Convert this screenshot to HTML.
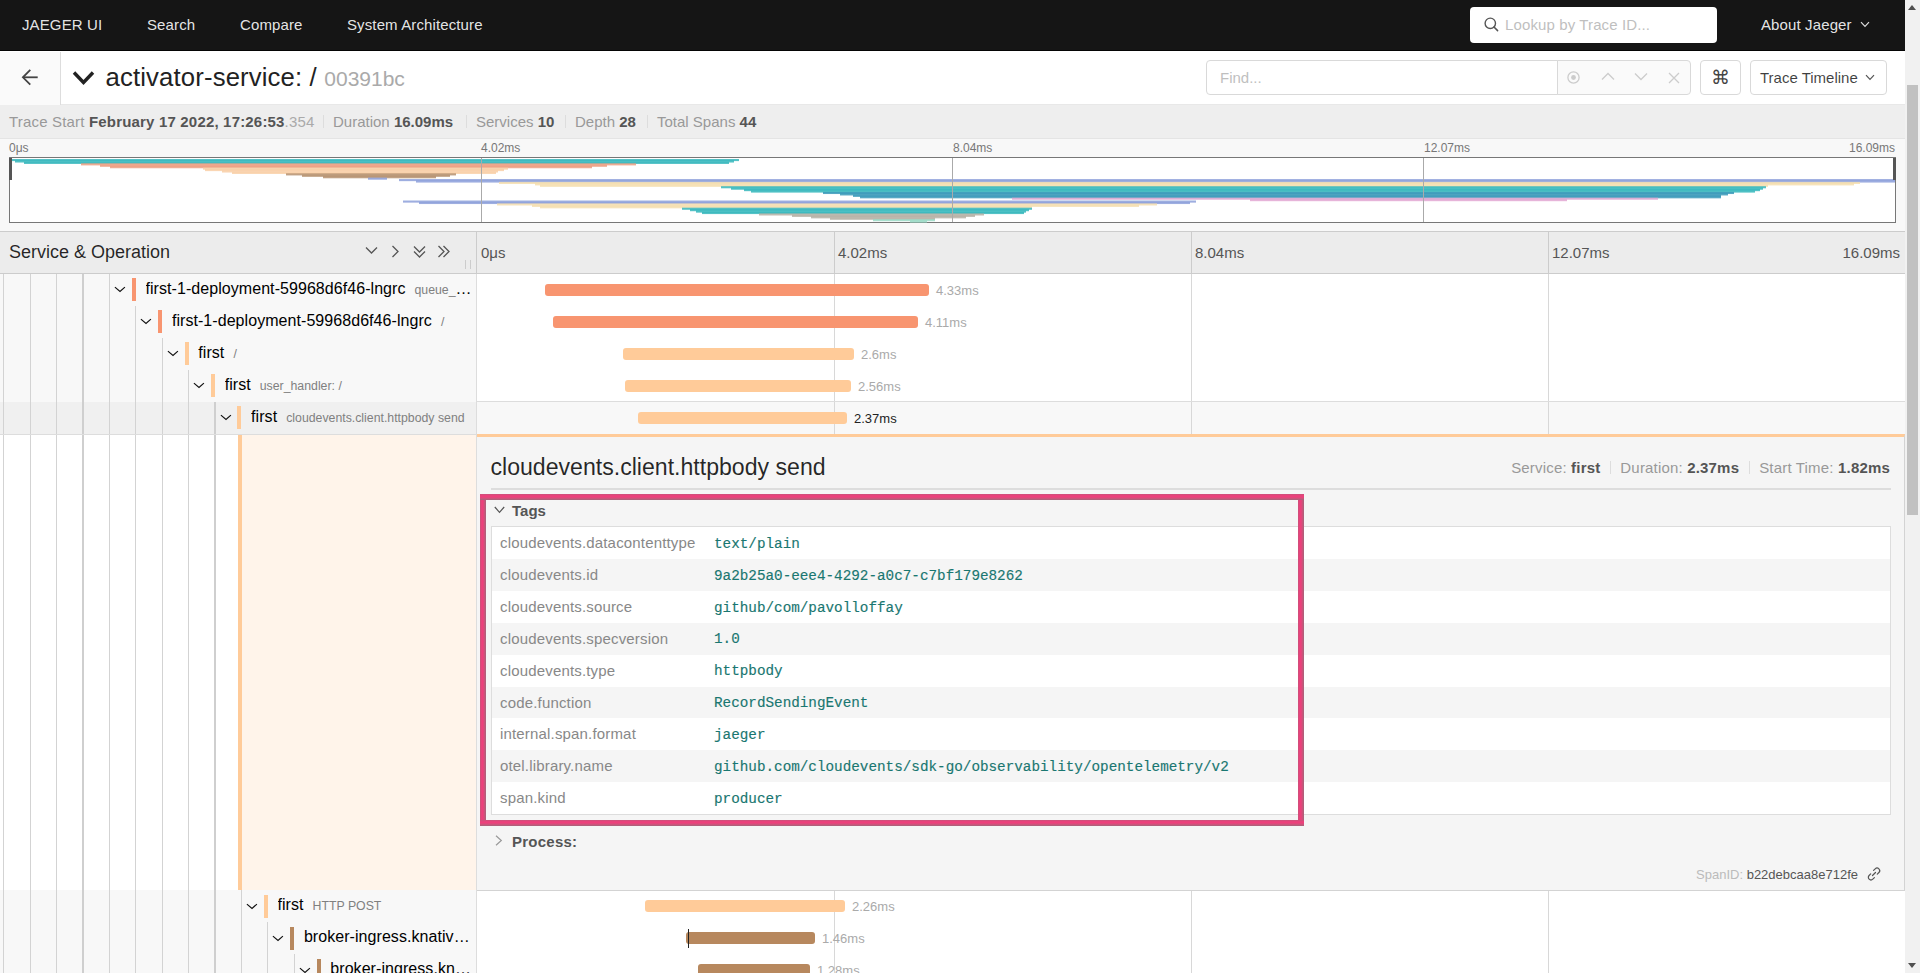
<!DOCTYPE html><html><head><meta charset="utf-8"><style>
*{box-sizing:border-box;margin:0;padding:0}
html,body{width:1920px;height:973px;overflow:hidden;background:#fff;font-family:"Liberation Sans",sans-serif;color:rgba(0,0,0,.85)}
.a{position:absolute}
.nw{white-space:nowrap}
#top{left:0;top:0;width:1905px;height:51px;background:#151515;border-bottom:1px solid #050505}
#top .it{position:absolute;top:0;line-height:49px;font-size:15px;letter-spacing:.12px;color:rgba(255,255,255,.9);white-space:nowrap}
#sbar{left:1905px;top:0;width:15px;height:973px;background:#f1f1f1}
#sthumb{left:1907px;top:85px;width:11px;height:430px;background:#c1c1c1}
.tri{position:absolute;width:0;height:0;border-left:4.5px solid transparent;border-right:4.5px solid transparent}
#summ{left:0;top:105px;width:1905px;height:34px;background:#eee;border-bottom:1px solid #e4e4e4;font-size:15px;color:#999;white-space:nowrap}
#summ .itm{position:absolute;top:0;line-height:33px}
#summ b{color:#555;font-weight:bold}
#summ .dv{position:absolute;top:10px;width:1px;height:13px;background:#ddd}
#mini{left:0;top:139px;width:1905px;height:92px;background:#f8f8f8}
.tk{position:absolute;font-size:12px;color:#777;white-space:nowrap;top:142px;line-height:13px}
#thead{left:0;top:231px;width:1905px;height:43px;background:#ececec;border-top:1px solid #ccc;border-bottom:1px solid #ccc}
.row{position:absolute;left:0;width:1905px;height:32px}
.lc{position:absolute;left:0;top:0;width:476px;height:32px;background:#f8f8f8;overflow:hidden}
.rc{position:absolute;left:477px;top:0;width:1428px;height:32px;background:#fff}
.guide{position:absolute;top:0;width:1px;height:100%;background:#d3d3d3}
.chev{position:absolute}
.cbar{position:absolute;top:4px;width:4px;height:23px}
.svc{position:absolute;top:-1.0px;line-height:32px;font-size:16px;letter-spacing:.06px;color:#000;white-space:nowrap}
.op{font-size:12.3px;letter-spacing:0;color:#808080;margin-left:9px}
.bar{position:absolute;top:10.2px;height:11.6px;border-radius:3px}
.lbl{position:absolute;top:1px;line-height:32px;font-size:13px;color:#aaa;white-space:nowrap}
.vline{position:absolute;top:0;width:1px;height:100%;background:#d8d8d8}
</style></head><body>
<div id="top" class="a">
<div class="it" style="left:22px">JAEGER UI</div>
<div class="it" style="left:147px">Search</div>
<div class="it" style="left:240px">Compare</div>
<div class="it" style="left:347px">System Architecture</div>
<div class="it" style="left:1761px">About Jaeger</div>
<div class="a" style="left:1470px;top:7px;width:247px;height:36px;background:#fff;border-radius:4px"></div>
<svg class="a" style="left:1484px;top:17px" width="15" height="15" viewBox="0 0 15 15"><circle cx="6.3" cy="6.3" r="5.2" fill="none" stroke="#555" stroke-width="1.4"/><line x1="10" y1="10" x2="13.6" y2="13.6" stroke="#555" stroke-width="1.5" stroke-linecap="round"/></svg>
<div class="a nw" style="left:1505px;top:7px;line-height:36px;font-size:15px;letter-spacing:.12px;color:#bfbfbf">Lookup by Trace ID...</div>
<svg class="a" style="left:1860px;top:21px" width="10" height="7" viewBox="0 0 10 7"><polyline points="1,1.2 5,5.4 9,1.2" fill="none" stroke="#ddd" stroke-width="1.2"/></svg>
</div>
<div id="sbar" class="a"></div><div id="sthumb" class="a"></div>
<div class="tri" style="left:1908px;top:5px;border-bottom:5px solid #505050"></div>
<div class="tri" style="left:1908px;top:963px;border-top:5px solid #505050"></div>
<div class="a" style="left:0;top:52px;width:61px;height:53px;background:#fafafa;border-right:1px solid #ddd"></div>
<svg class="a" style="left:21px;top:68px" width="19" height="19" viewBox="0 0 19 19"><line x1="2" y1="9.3" x2="16.7" y2="9.3" stroke="#444" stroke-width="1.8"/><polyline points="9.3,1.9 1.9,9.3 9.3,16.7" fill="none" stroke="#444" stroke-width="1.8"/></svg>
<svg class="a" style="left:72px;top:70px" width="23" height="16" viewBox="0 0 23 16"><polyline points="2,2.5 11.5,12.5 21,2.5" fill="none" stroke="#222" stroke-width="3.4"/></svg>
<div class="a nw" style="left:105.5px;top:55px;line-height:44px;font-size:25.7px;letter-spacing:.15px;color:#222">activator-service: /</div>
<div class="a nw" style="left:324.3px;top:56.8px;line-height:44px;font-size:21px;color:#aaa">00391bc</div>
<div class="a" style="left:1206px;top:60px;width:352px;height:35px;background:#fff;border:1px solid #d9d9d9;border-radius:4px 0 0 4px"></div>
<div class="a nw" style="left:1220px;top:60px;line-height:35px;font-size:15px;color:#bfbfbf">Find...</div>
<div class="a" style="left:1557px;top:60px;width:134px;height:35px;background:#fafafa;border:1px solid #d9d9d9;border-left:1px solid #d9d9d9;border-radius:0 4px 4px 0"></div>
<svg class="a" style="left:1566px;top:70px" width="15" height="15" viewBox="0 0 15 15"><circle cx="7.5" cy="7.5" r="5.6" fill="none" stroke="#ccc" stroke-width="1.3"/><circle cx="7.5" cy="7.5" r="2.4" fill="#ccc"/></svg>
<svg class="a" style="left:1601px;top:72px" width="14" height="9" viewBox="0 0 14 9"><polyline points="1,7.5 7,1.5 13,7.5" fill="none" stroke="#ccc" stroke-width="1.3"/></svg>
<svg class="a" style="left:1634px;top:72px" width="14" height="9" viewBox="0 0 14 9"><polyline points="1,1.5 7,7.5 13,1.5" fill="none" stroke="#ccc" stroke-width="1.3"/></svg>
<svg class="a" style="left:1668px;top:72px" width="12" height="12" viewBox="0 0 12 12"><path d="M1,1 L11,11 M11,1 L1,11" fill="none" stroke="#ccc" stroke-width="1.3"/></svg>
<div class="a" style="left:1700px;top:60px;width:41px;height:35px;background:#fff;border:1px solid #d9d9d9;border-radius:4px"></div>
<div class="a nw" style="left:1700px;top:60px;width:41px;line-height:35px;text-align:center;font-size:19px;color:#444">&#8984;</div>
<div class="a" style="left:1750px;top:60px;width:137px;height:35px;background:#fff;border:1px solid #d9d9d9;border-radius:4px"></div>
<div class="a nw" style="left:1760px;top:60px;line-height:35px;font-size:15px;color:rgba(0,0,0,.75)">Trace Timeline</div>
<svg class="a" style="left:1865px;top:74px" width="10" height="7" viewBox="0 0 10 7"><polyline points="1,1.2 5,5.4 9,1.2" fill="none" stroke="#555" stroke-width="1.2"/></svg>
<div class="a" style="left:61px;top:104px;width:1844px;height:1px;background:#e8e8e8"></div>
<div id="summ" class="a">
<div class="itm" style="left:9px;letter-spacing:.18px">Trace Start <b>February 17 2022, 17:26:53</b><span style="color:#aaa">.354</span></div>
<div class="dv" style="left:323px"></div>
<div class="itm" style="left:333px">Duration <b>16.09ms</b></div>
<div class="dv" style="left:466px"></div>
<div class="itm" style="left:476px">Services <b>10</b></div>
<div class="dv" style="left:565px"></div>
<div class="itm" style="left:575px">Depth <b>28</b></div>
<div class="dv" style="left:647px"></div>
<div class="itm" style="left:657px">Total Spans <b>44</b></div>
</div>
<div id="mini" class="a"></div>
<div class="tk" style="left:9px">0&#956;s</div>
<div class="tk" style="left:481px">4.02ms</div>
<div class="tk" style="left:953px">8.04ms</div>
<div class="tk" style="left:1424px">12.07ms</div>
<div class="tk" style="left:1795px;width:100px;text-align:right">16.09ms</div>
<svg class="a" style="left:9px;top:157px;filter:saturate(0.85)" width="1888" height="66" viewBox="0 0 1888 66"><rect x="0.5" y="0.5" width="1886" height="65" fill="#fff" stroke="#777" stroke-width="1"/><rect x="1" y="2.000" width="729" height="2.1" fill="#17B8BE" fill-opacity="0.8"/><rect x="6" y="3.432" width="719" height="2.1" fill="#17B8BE" fill-opacity="0.8"/><rect x="15" y="4.864" width="705" height="2.1" fill="#17B8BE" fill-opacity="0.8"/><rect x="72" y="6.295" width="555" height="2.1" fill="#F89570" fill-opacity="0.8"/><rect x="91" y="7.727" width="507" height="2.1" fill="#F89570" fill-opacity="0.8"/><rect x="101" y="9.159" width="482" height="2.1" fill="#F89570" fill-opacity="0.8"/><rect x="194" y="10.591" width="305" height="2.1" fill="#FFCB99" fill-opacity="0.8"/><rect x="196" y="12.023" width="299" height="2.1" fill="#FFCB99" fill-opacity="0.8"/><rect x="213" y="13.455" width="276" height="2.1" fill="#FFCB99" fill-opacity="0.8"/><rect x="223" y="14.886" width="264" height="2.1" fill="#FFCB99" fill-opacity="0.8"/><rect x="277" y="16.318" width="170" height="2.1" fill="#B7885E" fill-opacity="0.8"/><rect x="293" y="17.750" width="148" height="2.1" fill="#B7885E" fill-opacity="0.8"/><rect x="314" y="19.182" width="113" height="2.1" fill="#B7885E" fill-opacity="0.8"/><rect x="359" y="20.614" width="19" height="2.1" fill="#829AE3" fill-opacity="0.8"/><rect x="390" y="22.045" width="1496" height="2.1" fill="#829AE3" fill-opacity="0.8"/><rect x="407" y="23.477" width="1479" height="2.1" fill="#829AE3" fill-opacity="0.8"/><rect x="490" y="24.909" width="1361" height="2.1" fill="#F8DCA1" fill-opacity="0.8"/><rect x="526" y="26.341" width="1319" height="2.1" fill="#F8DCA1" fill-opacity="0.8"/><rect x="531" y="27.773" width="1228" height="2.1" fill="#F8DCA1" fill-opacity="0.8"/><rect x="712" y="29.205" width="1045" height="2.1" fill="#17B8BE" fill-opacity="0.8"/><rect x="722" y="30.636" width="1032" height="2.1" fill="#17B8BE" fill-opacity="0.8"/><rect x="735" y="32.068" width="1016" height="2.1" fill="#17B8BE" fill-opacity="0.8"/><rect x="742" y="33.500" width="1004" height="2.1" fill="#17B8BE" fill-opacity="0.8"/><rect x="814" y="34.932" width="911" height="2.1" fill="#1E96BE" fill-opacity="0.8"/><rect x="831" y="36.364" width="888" height="2.1" fill="#1E96BE" fill-opacity="0.8"/><rect x="844" y="37.795" width="868" height="2.1" fill="#1E96BE" fill-opacity="0.8"/><rect x="851" y="39.227" width="861" height="2.1" fill="#1E96BE" fill-opacity="0.8"/><rect x="1003" y="40.659" width="646" height="2.1" fill="#E79FD5" fill-opacity="0.8"/><rect x="1241" y="42.091" width="317" height="2.1" fill="#E79FD5" fill-opacity="0.8"/><rect x="394" y="43.523" width="793" height="2.1" fill="#829AE3" fill-opacity="0.8"/><rect x="410" y="44.955" width="771" height="2.1" fill="#829AE3" fill-opacity="0.8"/><rect x="488" y="46.386" width="660" height="2.1" fill="#F8DCA1" fill-opacity="0.8"/><rect x="523" y="47.818" width="607" height="2.1" fill="#F8DCA1" fill-opacity="0.8"/><rect x="531" y="49.250" width="492" height="2.1" fill="#F8DCA1" fill-opacity="0.8"/><rect x="673" y="50.682" width="350" height="2.1" fill="#17B8BE" fill-opacity="0.8"/><rect x="681" y="52.114" width="339" height="2.1" fill="#17B8BE" fill-opacity="0.8"/><rect x="687" y="53.545" width="330" height="2.1" fill="#17B8BE" fill-opacity="0.8"/><rect x="693" y="54.977" width="322" height="2.1" fill="#17B8BE" fill-opacity="0.8"/><rect x="750" y="56.409" width="225" height="2.1" fill="#B3AD9E" fill-opacity="0.8"/><rect x="783" y="57.841" width="183" height="2.1" fill="#B3AD9E" fill-opacity="0.8"/><rect x="802" y="59.273" width="155" height="2.1" fill="#B3AD9E" fill-opacity="0.8"/><rect x="821" y="60.705" width="105" height="2.1" fill="#B3AD9E" fill-opacity="0.8"/><rect x="864" y="62.136" width="62" height="2.1" fill="#89DAC1" fill-opacity="0.8"/><rect x="901" y="63.568" width="17" height="2.1" fill="#89DAC1" fill-opacity="0.8"/><line x1="472.5" y1="1" x2="472.5" y2="65" stroke="#aaa" stroke-width="1"/><line x1="943.5" y1="1" x2="943.5" y2="65" stroke="#aaa" stroke-width="1"/><line x1="1414.5" y1="1" x2="1414.5" y2="65" stroke="#aaa" stroke-width="1"/><rect x="0" y="1" width="3" height="22" fill="#555"/><rect x="1884" y="1" width="3" height="22" fill="#555"/></svg>
<div id="thead" class="a"></div>
<div class="a nw" style="left:9px;top:232px;line-height:41px;font-size:18px;color:rgba(0,0,0,.85)">Service &amp; Operation</div>
<svg class="a" style="left:365px;top:246px" width="13" height="9" viewBox="0 0 13 9"><polyline points="1,1.5 6.5,7 12,1.5" fill="none" stroke="#555" stroke-width="1.3"/></svg>
<svg class="a" style="left:391px;top:245px" width="9" height="13" viewBox="0 0 9 13"><polyline points="1.5,1 7,6.5 1.5,12" fill="none" stroke="#555" stroke-width="1.3"/></svg>
<svg class="a" style="left:413px;top:245px" width="13" height="14" viewBox="0 0 13 14"><polyline points="1,1.5 6.5,7 12,1.5" fill="none" stroke="#555" stroke-width="1.3"/><polyline points="1,6.5 6.5,12 12,6.5" fill="none" stroke="#555" stroke-width="1.3"/></svg>
<svg class="a" style="left:437px;top:245px" width="14" height="13" viewBox="0 0 14 13"><polyline points="1.5,1 7,6.5 1.5,12" fill="none" stroke="#555" stroke-width="1.3"/><polyline points="6.5,1 12,6.5 6.5,12" fill="none" stroke="#555" stroke-width="1.3"/></svg>
<div class="a" style="left:465px;top:260px;width:1px;height:9px;background:#ccc"></div><div class="a" style="left:470px;top:260px;width:1px;height:9px;background:#ccc"></div>
<div class="a" style="left:476px;top:232px;width:1px;height:41px;background:#ccc"></div>
<div class="a" style="left:834px;top:232px;width:1px;height:41px;background:#ccc"></div>
<div class="a" style="left:1191px;top:232px;width:1px;height:41px;background:#ccc"></div>
<div class="a" style="left:1548px;top:232px;width:1px;height:41px;background:#ccc"></div>
<div class="a nw" style="left:481px;top:232px;line-height:41px;font-size:15px;color:#555">0&#956;s</div>
<div class="a nw" style="left:838px;top:232px;line-height:41px;font-size:15px;color:#555">4.02ms</div>
<div class="a nw" style="left:1195px;top:232px;line-height:41px;font-size:15px;color:#555">8.04ms</div>
<div class="a nw" style="left:1552px;top:232px;line-height:41px;font-size:15px;color:#555">12.07ms</div>
<div class="a nw" style="left:1790px;top:232px;width:110px;text-align:right;line-height:41px;font-size:15px;color:#555">16.09ms</div>
<div class="row" style="top:274px"><div class="lc" style="background:#f8f8f8"><div class="guide" style="left:3px"></div><div class="guide" style="left:30px"></div><div class="guide" style="left:56px"></div><div class="guide" style="left:82px;width:2px;background:#cfcfcf"></div><div class="guide" style="left:109px"></div><svg class="chev" style="left:114.0px;top:12px" width="12" height="7" viewBox="0 0 12 7"><polyline points="0.9,1.1 6,5.5 10.9,1.1" fill="none" stroke="#111" stroke-width="1.2"/></svg><div class="cbar" style="left:131.7px;top:4px;background:#F89570"></div><div class="svc" style="left:145.5px;width:326.5px;overflow:hidden;text-overflow:ellipsis">first-1-deployment-59968d6f46-lngrc<span class="op">queue_proxy</span></div></div><div class="a" style="left:476px;top:0;width:1px;height:32px;background:#ddd"></div><div class="rc" style="background:#fff"><div class="vline" style="left:357px"></div><div class="vline" style="left:714px"></div><div class="vline" style="left:1071px"></div><div class="bar" style="left:68px;width:384px;background:#F89570"></div><div class="lbl" style="left:459px;">4.33ms</div></div></div>
<div class="row" style="top:306px"><div class="lc" style="background:#f8f8f8"><div class="guide" style="left:3px"></div><div class="guide" style="left:30px"></div><div class="guide" style="left:56px"></div><div class="guide" style="left:82px;width:2px;background:#cfcfcf"></div><div class="guide" style="left:109px"></div><div class="guide" style="left:135px"></div><svg class="chev" style="left:140.4px;top:12px" width="12" height="7" viewBox="0 0 12 7"><polyline points="0.9,1.1 6,5.5 10.9,1.1" fill="none" stroke="#111" stroke-width="1.2"/></svg><div class="cbar" style="left:158.1px;top:4px;background:#F89570"></div><div class="svc" style="left:171.9px;width:300.1px;overflow:hidden;text-overflow:ellipsis">first-1-deployment-59968d6f46-lngrc<span class="op">/</span></div></div><div class="a" style="left:476px;top:0;width:1px;height:32px;background:#ddd"></div><div class="rc" style="background:#fff"><div class="vline" style="left:357px"></div><div class="vline" style="left:714px"></div><div class="vline" style="left:1071px"></div><div class="bar" style="left:76px;width:365px;background:#F89570"></div><div class="lbl" style="left:448px;">4.11ms</div></div></div>
<div class="row" style="top:338px"><div class="lc" style="background:#f8f8f8"><div class="guide" style="left:3px"></div><div class="guide" style="left:30px"></div><div class="guide" style="left:56px"></div><div class="guide" style="left:82px;width:2px;background:#cfcfcf"></div><div class="guide" style="left:109px"></div><div class="guide" style="left:135px"></div><div class="guide" style="left:162px"></div><svg class="chev" style="left:166.8px;top:12px" width="12" height="7" viewBox="0 0 12 7"><polyline points="0.9,1.1 6,5.5 10.9,1.1" fill="none" stroke="#111" stroke-width="1.2"/></svg><div class="cbar" style="left:184.5px;top:4px;background:#FFCB99"></div><div class="svc" style="left:198.3px;width:273.7px;overflow:hidden;text-overflow:ellipsis">first<span class="op">/</span></div></div><div class="a" style="left:476px;top:0;width:1px;height:32px;background:#ddd"></div><div class="rc" style="background:#fff"><div class="vline" style="left:357px"></div><div class="vline" style="left:714px"></div><div class="vline" style="left:1071px"></div><div class="bar" style="left:146px;width:231px;background:#FFCB99"></div><div class="lbl" style="left:384px;">2.6ms</div></div></div>
<div class="row" style="top:370px"><div class="lc" style="background:#f8f8f8"><div class="guide" style="left:3px"></div><div class="guide" style="left:30px"></div><div class="guide" style="left:56px"></div><div class="guide" style="left:82px;width:2px;background:#cfcfcf"></div><div class="guide" style="left:109px"></div><div class="guide" style="left:135px"></div><div class="guide" style="left:162px"></div><div class="guide" style="left:188px"></div><svg class="chev" style="left:193.2px;top:12px" width="12" height="7" viewBox="0 0 12 7"><polyline points="0.9,1.1 6,5.5 10.9,1.1" fill="none" stroke="#111" stroke-width="1.2"/></svg><div class="cbar" style="left:210.9px;top:4px;background:#FFCB99"></div><div class="svc" style="left:224.7px;width:247.3px;overflow:hidden;text-overflow:ellipsis">first<span class="op">user_handler: /</span></div></div><div class="a" style="left:476px;top:0;width:1px;height:32px;background:#ddd"></div><div class="rc" style="background:#fff"><div class="vline" style="left:357px"></div><div class="vline" style="left:714px"></div><div class="vline" style="left:1071px"></div><div class="bar" style="left:148px;width:226px;background:#FFCB99"></div><div class="lbl" style="left:381px;">2.56ms</div></div></div>
<div class="row" style="top:402px"><div class="lc" style="background:#f0f0f0"><div class="guide" style="left:3px"></div><div class="guide" style="left:30px"></div><div class="guide" style="left:56px"></div><div class="guide" style="left:82px;width:2px;background:#cfcfcf"></div><div class="guide" style="left:109px"></div><div class="guide" style="left:135px"></div><div class="guide" style="left:162px"></div><div class="guide" style="left:188px"></div><div class="guide" style="left:214px;width:2px;background:#cfcfcf"></div><svg class="chev" style="left:219.6px;top:12px" width="12" height="7" viewBox="0 0 12 7"><polyline points="0.9,1.1 6,5.5 10.9,1.1" fill="none" stroke="#111" stroke-width="1.2"/></svg><div class="cbar" style="left:237.3px;top:4px;background:#FFCB99"></div><div class="svc" style="left:251.1px;width:220.9px;overflow:hidden;text-overflow:ellipsis">first<span class="op">cloudevents.client.httpbody send</span></div></div><div class="a" style="left:476px;top:0;width:1px;height:32px;background:#ddd"></div><div class="rc" style="background:#f8f8f8"><div class="vline" style="left:357px"></div><div class="vline" style="left:714px"></div><div class="vline" style="left:1071px"></div><div class="bar" style="left:161px;width:209px;background:#FFCB99"></div><div class="lbl" style="left:377px;color:#222">2.37ms</div></div></div>
<div class="a" style="left:477px;top:401px;width:1428px;height:1px;background:#ddd"></div>
<div class="a" style="left:0;top:434px;width:1905px;height:1px;background:#ddd"></div>
<div class="row" style="top:890px"><div class="lc" style="background:#f8f8f8"><div class="guide" style="left:3px"></div><div class="guide" style="left:30px"></div><div class="guide" style="left:56px"></div><div class="guide" style="left:82px;width:2px;background:#cfcfcf"></div><div class="guide" style="left:109px"></div><div class="guide" style="left:135px"></div><div class="guide" style="left:162px"></div><div class="guide" style="left:188px"></div><div class="guide" style="left:214px;width:2px;background:#cfcfcf"></div><div class="guide" style="left:241px"></div><svg class="chev" style="left:246.0px;top:13px" width="12" height="7" viewBox="0 0 12 7"><polyline points="0.9,1.1 6,5.5 10.9,1.1" fill="none" stroke="#111" stroke-width="1.2"/></svg><div class="cbar" style="left:263.7px;top:5px;background:#FFCB99"></div><div class="svc" style="left:277.5px;width:194.5px;overflow:hidden;text-overflow:ellipsis">first<span class="op">HTTP POST</span></div></div><div class="a" style="left:476px;top:0;width:1px;height:32px;background:#ddd"></div><div class="rc" style="background:#fff"><div class="vline" style="left:357px"></div><div class="vline" style="left:714px"></div><div class="vline" style="left:1071px"></div><div class="bar" style="left:168px;width:200px;background:#FFCB99"></div><div class="lbl" style="left:375px;">2.26ms</div></div></div>
<div class="row" style="top:922px"><div class="lc" style="background:#f8f8f8"><div class="guide" style="left:3px"></div><div class="guide" style="left:30px"></div><div class="guide" style="left:56px"></div><div class="guide" style="left:82px;width:2px;background:#cfcfcf"></div><div class="guide" style="left:109px"></div><div class="guide" style="left:135px"></div><div class="guide" style="left:162px"></div><div class="guide" style="left:188px"></div><div class="guide" style="left:214px;width:2px;background:#cfcfcf"></div><div class="guide" style="left:241px"></div><div class="guide" style="left:267px"></div><svg class="chev" style="left:272.4px;top:13px" width="12" height="7" viewBox="0 0 12 7"><polyline points="0.9,1.1 6,5.5 10.9,1.1" fill="none" stroke="#111" stroke-width="1.2"/></svg><div class="cbar" style="left:290.1px;top:5px;background:#B7885E"></div><div class="svc" style="left:303.9px;width:168.1px;overflow:hidden;text-overflow:ellipsis">broker-ingress.knative-eventing</div></div><div class="a" style="left:476px;top:0;width:1px;height:32px;background:#ddd"></div><div class="rc" style="background:#fff"><div class="vline" style="left:357px"></div><div class="vline" style="left:714px"></div><div class="vline" style="left:1071px"></div><div class="bar" style="left:209px;width:129px;background:#B7885E"></div><div class="lbl" style="left:345px;">1.46ms</div></div></div>
<div class="a" style="left:688px;top:929px;width:1px;height:19px;background:#222"></div>
<div class="row" style="top:954px"><div class="lc" style="background:#f8f8f8"><div class="guide" style="left:3px"></div><div class="guide" style="left:30px"></div><div class="guide" style="left:56px"></div><div class="guide" style="left:82px;width:2px;background:#cfcfcf"></div><div class="guide" style="left:109px"></div><div class="guide" style="left:135px"></div><div class="guide" style="left:162px"></div><div class="guide" style="left:188px"></div><div class="guide" style="left:214px;width:2px;background:#cfcfcf"></div><div class="guide" style="left:241px"></div><div class="guide" style="left:267px"></div><div class="guide" style="left:294px"></div><svg class="chev" style="left:298.8px;top:13px" width="12" height="7" viewBox="0 0 12 7"><polyline points="0.9,1.1 6,5.5 10.9,1.1" fill="none" stroke="#111" stroke-width="1.2"/></svg><div class="cbar" style="left:316.5px;top:5px;background:#B7885E"></div><div class="svc" style="left:330.3px;width:141.7px;overflow:hidden;text-overflow:ellipsis">broker-ingress.knative-eventing</div></div><div class="a" style="left:476px;top:0;width:1px;height:32px;background:#ddd"></div><div class="rc" style="background:#fff"><div class="vline" style="left:357px"></div><div class="vline" style="left:714px"></div><div class="vline" style="left:1071px"></div><div class="bar" style="left:221px;width:112px;background:#B7885E"></div><div class="lbl" style="left:340px;">1.28ms</div></div></div>
<div class="a" style="left:0;top:435px;width:476px;height:455px;background:#fff"></div>
<div class="a" style="left:3px;top:435px;width:1px;height:456px;background:#d3d3d3"></div>
<div class="a" style="left:30px;top:435px;width:1px;height:456px;background:#d3d3d3"></div>
<div class="a" style="left:56px;top:435px;width:1px;height:456px;background:#d3d3d3"></div>
<div class="a" style="left:82px;top:435px;width:2px;height:456px;background:#cfcfcf"></div>
<div class="a" style="left:109px;top:435px;width:1px;height:456px;background:#d3d3d3"></div>
<div class="a" style="left:135px;top:435px;width:1px;height:456px;background:#d3d3d3"></div>
<div class="a" style="left:162px;top:435px;width:1px;height:456px;background:#d3d3d3"></div>
<div class="a" style="left:188px;top:435px;width:1px;height:456px;background:#d3d3d3"></div>
<div class="a" style="left:214px;top:435px;width:2px;height:456px;background:#cfcfcf"></div>
<div class="a" style="left:238px;top:435px;width:4px;height:455px;background:#FFCB99"></div>
<div class="a" style="left:242px;top:435px;width:234px;height:455px;background:#fff4ea"></div>
<div class="a" style="left:476px;top:435px;width:1px;height:455px;background:#ddd"></div>
<div class="a" style="left:477px;top:434px;width:1428px;height:457px;background:#f5f5f5;border-top:3px solid #FFCB99;border-bottom:1px solid #d3d3d3;border-right:1px solid #d3d3d3"></div>
<div class="a nw" style="left:490.5px;top:450px;line-height:34px;font-size:23.1px;color:rgba(0,0,0,.85)">cloudevents.client.httpbody send</div>
<div class="a nw" style="left:1390px;top:456px;width:500px;text-align:right;line-height:24px;font-size:15px;letter-spacing:.18px;color:#999">Service: <b style="color:#555">first</b><span style="display:inline-block;width:1px;height:13px;background:#ddd;margin:0 9.5px;vertical-align:-1px"></span>Duration: <b style="color:#555">2.37ms</b><span style="display:inline-block;width:1px;height:13px;background:#ddd;margin:0 9.5px;vertical-align:-1px"></span>Start Time: <b style="color:#555">1.82ms</b></div>
<div class="a" style="left:491px;top:488px;width:1400px;height:2px;background:#ddd"></div>
<svg class="a" style="left:494px;top:506px" width="11" height="8" viewBox="0 0 11 8"><polyline points="0.8,1 5.5,6.3 10.2,1" fill="none" stroke="#555" stroke-width="1.2"/></svg>
<div class="a nw" style="left:512px;top:499px;line-height:24px;font-size:15px;font-weight:bold;color:#555">Tags</div>
<div class="a" style="left:491px;top:526px;width:1400px;height:289px;border:1px solid #ddd;background:#fff"></div>
<div class="a" style="left:492px;top:527.0px;width:1398px;height:31.9px;background:#fff"></div>
<div class="a nw" style="left:500px;top:527.0px;line-height:32px;font-size:15px;letter-spacing:.17px;color:#888">cloudevents.datacontenttype</div>
<div class="a nw" style="left:714px;top:527.7px;line-height:32px;font-size:14.3px;font-family:'Liberation Mono',monospace;color:#1a7771;-webkit-text-stroke:0.15px #1a7771">text/plain</div>
<div class="a" style="left:492px;top:558.9px;width:1398px;height:31.9px;background:#f5f5f5"></div>
<div class="a nw" style="left:500px;top:558.9px;line-height:32px;font-size:15px;letter-spacing:.17px;color:#888">cloudevents.id</div>
<div class="a nw" style="left:714px;top:559.6px;line-height:32px;font-size:14.3px;font-family:'Liberation Mono',monospace;color:#1a7771;-webkit-text-stroke:0.15px #1a7771">9a2b25a0-eee4-4292-a0c7-c7bf179e8262</div>
<div class="a" style="left:492px;top:590.8px;width:1398px;height:31.9px;background:#fff"></div>
<div class="a nw" style="left:500px;top:590.8px;line-height:32px;font-size:15px;letter-spacing:.17px;color:#888">cloudevents.source</div>
<div class="a nw" style="left:714px;top:591.5px;line-height:32px;font-size:14.3px;font-family:'Liberation Mono',monospace;color:#1a7771;-webkit-text-stroke:0.15px #1a7771">github/com/pavolloffay</div>
<div class="a" style="left:492px;top:622.7px;width:1398px;height:31.9px;background:#f5f5f5"></div>
<div class="a nw" style="left:500px;top:622.7px;line-height:32px;font-size:15px;letter-spacing:.17px;color:#888">cloudevents.specversion</div>
<div class="a nw" style="left:714px;top:623.4px;line-height:32px;font-size:14.3px;font-family:'Liberation Mono',monospace;color:#1a7771;-webkit-text-stroke:0.15px #1a7771">1.0</div>
<div class="a" style="left:492px;top:654.6px;width:1398px;height:31.9px;background:#fff"></div>
<div class="a nw" style="left:500px;top:654.6px;line-height:32px;font-size:15px;letter-spacing:.17px;color:#888">cloudevents.type</div>
<div class="a nw" style="left:714px;top:655.3px;line-height:32px;font-size:14.3px;font-family:'Liberation Mono',monospace;color:#1a7771;-webkit-text-stroke:0.15px #1a7771">httpbody</div>
<div class="a" style="left:492px;top:686.5px;width:1398px;height:31.9px;background:#f5f5f5"></div>
<div class="a nw" style="left:500px;top:686.5px;line-height:32px;font-size:15px;letter-spacing:.17px;color:#888">code.function</div>
<div class="a nw" style="left:714px;top:687.2px;line-height:32px;font-size:14.3px;font-family:'Liberation Mono',monospace;color:#1a7771;-webkit-text-stroke:0.15px #1a7771">RecordSendingEvent</div>
<div class="a" style="left:492px;top:718.4px;width:1398px;height:31.9px;background:#fff"></div>
<div class="a nw" style="left:500px;top:718.4px;line-height:32px;font-size:15px;letter-spacing:.17px;color:#888">internal.span.format</div>
<div class="a nw" style="left:714px;top:719.1px;line-height:32px;font-size:14.3px;font-family:'Liberation Mono',monospace;color:#1a7771;-webkit-text-stroke:0.15px #1a7771">jaeger</div>
<div class="a" style="left:492px;top:750.3px;width:1398px;height:31.9px;background:#f5f5f5"></div>
<div class="a nw" style="left:500px;top:750.3px;line-height:32px;font-size:15px;letter-spacing:.17px;color:#888">otel.library.name</div>
<div class="a nw" style="left:714px;top:751.0px;line-height:32px;font-size:14.3px;font-family:'Liberation Mono',monospace;color:#1a7771;-webkit-text-stroke:0.15px #1a7771">github.com/cloudevents/sdk-go/observability/opentelemetry/v2</div>
<div class="a" style="left:492px;top:782.2px;width:1398px;height:31.9px;background:#fff"></div>
<div class="a nw" style="left:500px;top:782.2px;line-height:32px;font-size:15px;letter-spacing:.17px;color:#888">span.kind</div>
<div class="a nw" style="left:714px;top:782.9px;line-height:32px;font-size:14.3px;font-family:'Liberation Mono',monospace;color:#1a7771;-webkit-text-stroke:0.15px #1a7771">producer</div>
<svg class="a" style="left:495px;top:835px" width="8" height="11" viewBox="0 0 8 11"><polyline points="1,0.8 6.3,5.5 1,10.2" fill="none" stroke="#999" stroke-width="1.2"/></svg>
<div class="a nw" style="left:512px;top:829.5px;line-height:24px;font-size:15px;letter-spacing:.25px;font-weight:bold;color:#555">Process:</div>
<div class="a nw" style="left:1500px;top:865px;width:358px;text-align:right;line-height:20px;font-size:13px;color:#bbb">SpanID: <span style="color:#555">b22debcaa8e712fe</span></div>
<svg class="a" style="left:1867px;top:867px" width="14" height="14" viewBox="0 0 14 14"><path d="M5.5,8.5 L8.5,5.5 M6.6,3.4 L8.2,1.8 a2.6,2.6 0 0 1 3.7,3.7 L10.3,7.1 M7.4,10.6 L5.8,12.2 a2.6,2.6 0 0 1 -3.7,-3.7 L3.7,6.9" fill="none" stroke="#555" stroke-width="1.2" stroke-linecap="round"/></svg>
<div class="a" style="left:480px;top:494px;width:6px;height:332px;background:linear-gradient(to right, #c9527a 0px, #ef3e7b 2px, #eb407b 3px, #d2507a 4.2px, #a5637a 6px)"></div>
<div class="a" style="left:1298px;top:494px;width:6px;height:332px;background:linear-gradient(to right, #c9527a 0px, #ef3e7b 2px, #eb407b 3px, #d2507a 4.2px, #a5637a 6px)"></div>
<div class="a" style="left:480px;top:494px;width:824px;height:6px;background:linear-gradient(to bottom, #c9527a 0px, #ef3e7b 2px, #eb407b 3px, #d2507a 4.2px, #a5637a 6px)"></div>
<div class="a" style="left:480px;top:820px;width:824px;height:6px;background:linear-gradient(to bottom, #c9527a 0px, #ef3e7b 2px, #eb407b 3px, #d2507a 4.2px, #a5637a 6px)"></div>
</body></html>
